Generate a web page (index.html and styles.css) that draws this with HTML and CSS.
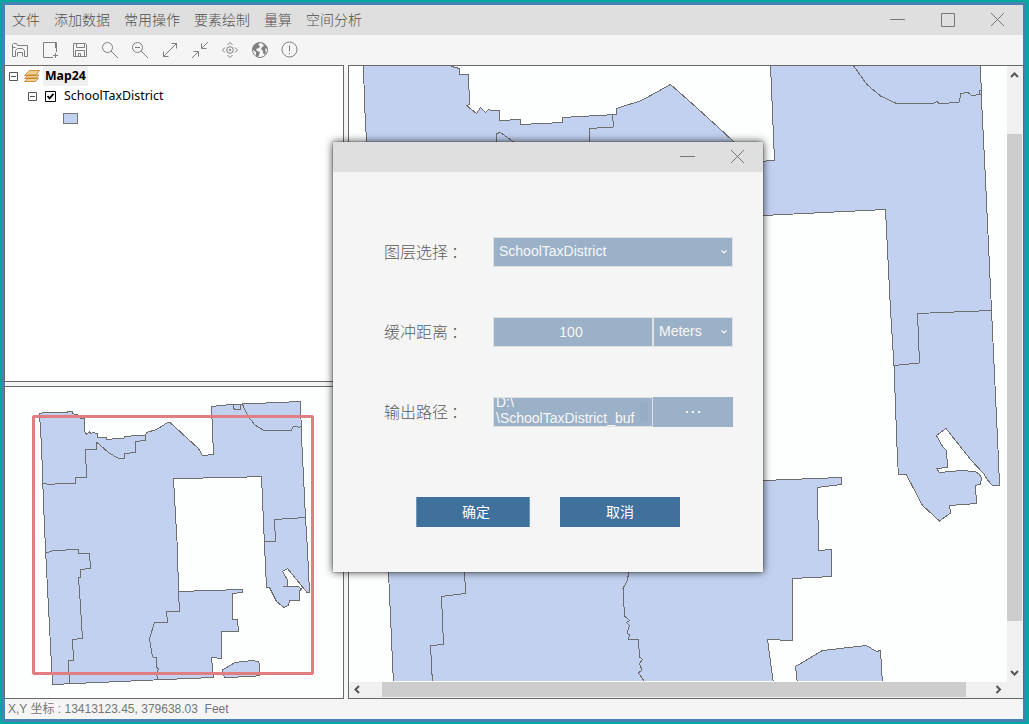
FILE: index.html
```html
<!DOCTYPE html>
<html lang="zh-CN">
<head>
<meta charset="utf-8">
<title>Map24</title>
<link rel="stylesheet" href="styles.css">
</head>
<body>
<div class="window">
  <header class="titlebar">
    <nav class="menu"><span>文件</span><span>添加数据</span><span>常用操作</span><span>要素绘制</span><span>量算</span><span>空间分析</span></nav>
    <svg class="window-controls" width="126" height="30" viewBox="0 0 126 30">
      <path d="M0 14.5h15" /><path d="M51.500 8.500h13v13h-13z"/><path d="M101 8l13 13M114 8l-13 13"/>
    </svg>
  </header>
  <div class="toolbar">
    <svg viewBox="0 0 20 20"><path d="M5.500 16.500h-3v-12l1-1h3l1 2h10v11h-3M2.500 7.500h3M5.500 16.500v-6l2-2h5l2 2v6M7.500 16.500v-4h5v4"/></svg>
    <svg viewBox="0 0 20 20"><path d="M13 17.500H3.500v-15h13V12M15.500 3v5M15.500 13v5M13 15.500h5"/></svg>
    <svg viewBox="0 0 20 20"><path d="M3.500 3.500h12l1 1v12h-13zM6.500 3.500v4h8v-4M5.500 16.500v-6h9v6M8.500 16.500v-3h2v3"/></svg>
    <svg viewBox="0 0 20 20"><circle cx="7.500" cy="7.500" r="5"/><path d="M11 11l7 7"/></svg>
    <svg viewBox="0 0 20 20"><circle cx="7.500" cy="7.500" r="5"/><path d="M11 11l7 7M5 7.500h5"/></svg>
    <svg viewBox="0 0 20 20"><path d="M3 17L17 3M11.500 3.500h5v5M3.500 11.500v5h5"/></svg>
    <svg viewBox="0 0 20 20"><path d="M18 2l-6 6M11.500 3.500v5h5M2 18l6-6M3.500 11.500h5v5"/></svg>
    <svg viewBox="0 0 20 20"><circle cx="10" cy="10" r="3.300"/><circle cx="10" cy="10" r=".8"/><path d="M7.500 5L10 2.500 12.500 5M7.500 15l2.500 2.500 2.500-2.500M5 7.500L2.500 10 5 12.500M15 7.500l2.500 2.500-2.500 2.500"/></svg>
    <svg viewBox="0 0 20 20"><circle cx="10" cy="10" r="7.500"/><path class="land" d="M2.500 8C3 5 6 2.500 10 2.500L8 5l2 1-1 2-3 1 1 2 3 1-1 3-1 2-2-1v-4l-3-2zM12 3c3 1 5 3 5.500 6L16 8l-1 2 1 2-1 3-2-2v-2l-2-2 1-2 2-1z"/></svg>
    <svg viewBox="0 0 20 20"><circle cx="9.500" cy="9.500" r="7.500"/><path d="M9.500 5.500v6M9.500 13v1.200"/></svg>
  </div>
  <main class="workspace">
    <div class="side">
      <section class="panel tree">
        <div class="node root">
          <svg class="toggle" viewBox="0 0 9 9"><path d="M.5.5h8v8h-8zM2 4.500h5"/></svg>
          <svg class="layers" viewBox="0 0 16 14"><path d="M.5 12.500l4-3.500h10l-3 3.500zM.5 9.500l4-3.500h10.500l-3 3.500zM.5 6.500l5-5h10l-4 5z"/></svg>
          <b>Map24</b>
        </div>
        <div class="node child">
          <svg class="toggle" viewBox="0 0 9 9"><path d="M.5.5h8v8h-8zM2 4.500h5"/></svg>
          <svg class="check" viewBox="0 0 11 11"><path class="box" d="M.5.5h10v10h-10z"/><path class="tick" d="M2.500 5l2 2.300 4-4.500"/></svg>
          <span>SchoolTaxDistrict</span>
        </div>
        <div class="swatch"></div>
      </section>
      <section class="panel overview">
        <svg class="map" viewBox="5 387 338 311">
          <g class="district">
            <path d="M39.500 413.500L45 412.500H67.500V411.500H72.500V413.500L79.500 415.500 80.500 418.500H84.500V431.500L86.500 434 89.500 432 91 434 93 432.500 97.500 433.500V437.500H106L106.500 439.500 124.500 438V436.500L145.500 435 146.500 432.500 156.500 429.500 167 423 170 422.500 198.500 448.500 202.500 455.500 213.500 454.500 211.500 406.500 231 404.500 300.500 401.500 301.500 436.500 305.500 517.500 307.500 550 309.500 592.500H307L287.500 568.500 282.500 571.500 287.500 580V586H282.500L298.500 586.500 301.500 589 299.500 591V600.500H289.500L288.500 605 284 607.500 276.500 601.500 269.500 587.500H266.500L264.500 545.500 261.500 476.500 233.500 477.500 173.500 478.500 177.500 550 178.500 591.500 242.500 589.500V592.500L232.500 593.500V619.500H237.500L238.500 631.500H221.500V658.500L211.500 657.500 213.500 677.500 165 679.500 52.500 684.500 45.500 549 43.500 503.500 41.500 445.500z"/>
            <path d="M224.500 677.500L222.500 670 235 662.500 252.500 660.500 258 661.500 259.500 663.500V675.500L252 676.500z"/>
          </g>
          <g class="boundary">
            <path d="M43.500 483.500L50.500 484.500 60 483.500H75.500V477.500H86.500L85.500 449.500H96.500L97 442.500 108.500 452.500 118.500 458.500H124.500V453.500L135.500 452.500V441.500L145.500 440.500V435"/>
            <path d="M233.500 405V408L235 409.500H240.500V405M242.500 404.500L248.500 417 255 425 264 430.500H291.500L293.500 426H297L298.500 427.500 301.500 426.500M264.500 541.500H275.500L274.500 519.500 305.500 517.500"/>
            <path d="M46.500 553L53.500 550.500 78.500 549.500V553.500H89.500L90.500 568.500 80.500 569.500V577.500H78.500L80 598.500 82.500 638.500 72.500 639.500 73.500 660.500H68.500L69.500 683.500M178.500 591.500L179.500 611.500H166.500L167.500 622.500H154.500L149.500 638.500 152.500 657 156.500 657.500V667L158.500 669 156.500 673 157.500 679"/>
          </g>
          <rect class="extent" x="33.500" y="416.500" width="279" height="257" rx="1"/>
        </svg>
      </section>
    </div>
    <section class="panel main-map">
      <svg class="map" viewBox="349 66 658 615">
        <g class="district">
          <path d="M363.500 64.500H451.500V66.500L459.500 68.500V74.500H468.500L469.500 104.500 466.500 105.500 476.500 113.500 480.500 107.500 485.500 112.500 488.500 109.500 494 111 499.500 110.500V120.500L520.500 119.500V124.500L562.500 122.500V117.500L616.500 114.500V108.500L641.500 100.500 670.500 84.500 687.500 99.500 718.500 127.500 733.500 141.500 750 162 774.500 160.500 770.500 64.500H980.500L981.500 100 985.500 180 991.500 310 998.500 460 999.500 485.500H992.500L987.500 480 984 474 971 460 946 428.500 936.500 435.500 942.500 446.500 946.500 450.500 947.500 467.500 936.500 468.500 939.500 472.500 961.500 470.500 975 471.500 979 474 981.500 478 980.500 484 975.500 485.500 976.500 503.500 949.500 505.500 950.500 513 939.500 521 922.500 505.500 906.500 475 898.500 474.500 897.500 460 894 365.500 890.500 310 885.500 209.500 763 215.500 640 220V487L763 480.500 841.500 477.500V484.500L817.500 487.500 818.500 550.500 831.500 549.500V576.500L792.500 578.500V640.500L767.500 639.500 773.500 684H393.500L388.500 572 366.500 141 364.500 103z"/>
          <path d="M797.500 684L795.500 666.500 822.500 650.500 866.500 645.500 876.500 651.500 880.500 650.500 882.500 684z"/>
        </g>
        <g class="boundary">
          <path d="M496.500 145V133.500L500.500 132.500 515 143M612.500 114.500L613.500 127 589.500 128.500V145"/>
          <path d="M853 65L867 84.500 880.500 96 896.500 103.500H933L937 101.500 939.500 104 959.500 102 960.500 93.500 968 92.500 971.500 95.500 981.500 94.500M979.500 94.500V90.500H981.500M894 365.500L919.500 363 917.500 313.500 991.500 310.500"/>
          <path d="M464.500 570L465.500 593.500 441.500 596.500 443.500 644.500 430.500 645.500 432.500 684M629.500 570L627 581 623 588.500 624.500 616 629.500 620.500 626.500 622.500 629.500 625.500 627 633 629.500 635 628.500 639.500H638.500L639.500 657 642.500 659.500 639.500 663.500 642 670 638.500 673 644 681"/>
        </g>
      </svg>
      <div class="vscroll">
        <svg viewBox="0 0 15 16"><path d="M4 11l3.500-3.500L11 11"/></svg><i></i>
        <svg class="end" viewBox="0 0 15 16"><path d="M4 5l3.500 3.500L11 5"/></svg>
      </div>
      <div class="hscroll">
        <svg viewBox="0 0 16 15"><path d="M10 4L6.500 7.500 10 11"/></svg><i></i>
        <svg class="end" viewBox="0 0 16 15"><path d="M5.500 4L9 7.500 5.500 11"/></svg>
      </div>
      <div class="corner"></div>
    </section>
  </main>
  <footer class="status">X,Y 坐标 : 13413123.45, 379638.03&nbsp; Feet</footer>
</div>

<div class="dialog">
  <div class="dialog-head">
    <svg width="66" height="30" viewBox="0 0 66 30"><path d="M0 14.500h15M51 8l13 13M64 8l-13 13"/></svg>
  </div>
  <form class="form">
    <div class="row"><label>图层选择<span class="colon">：</span></label><div class="field select wide"><span>SchoolTaxDistrict</span><svg viewBox="0 0 6 4"><path d="M.5.5L3 3 5.500.5"/></svg></div></div>
    <div class="row"><label>缓冲距离<span class="colon">：</span></label><div class="field number">100</div><div class="field select unit"><span>Meters</span><svg viewBox="0 0 6 4"><path d="M.5.5L3 3 5.500.5"/></svg></div></div>
    <div class="row"><label>输出路径<span class="colon">：</span></label><div class="field path"><span>D:\<br>\SchoolTaxDistrict_buf</span><i></i></div><div class="browse"><i></i><i></i><i></i></div></div>
    <div class="actions"><div class="button ok">确定</div><div class="button cancel">取消</div></div>
  </form>
</div>
</body>
</html>
```
FILE: styles.css
```css
* { box-sizing: border-box; }
body {
  margin: 0;
  width: 1029px;
  height: 724px;
  padding: 2px 3px 2px 2px;
  background: #00a99d;
  overflow: hidden;
  font-family: "Liberation Sans", "Noto Sans CJK SC", sans-serif;
}
svg { display: block; fill: none; flex: none; }
.window {
  height: 720px;
  border: 3px solid #4682b4;
  background: #f5f5f5;
  display: flex;
  flex-direction: column;
}
.titlebar {
  height: 30px;
  background: #dfdfdf;
  display: flex;
  justify-content: space-between;
  padding: 0 7px;
}
.menu {
  display: flex;
  gap: 14px;
  font: 300 14px/29px "Noto Sans CJK SC", sans-serif;
  color: #505050;
}
.window-controls { stroke: #777; }
.toolbar {
  height: 30px;
  display: flex;
  align-items: center;
  gap: 10px;
  padding-left: 5px;
}
.toolbar svg { width: 20px; height: 20px; stroke: #808080; }
.toolbar .land { fill: #808080; stroke: none; }

.workspace { height: 634px; margin: 0 -1px; display: flex; gap: 4px; }
.side { width: 340px; display: flex; flex-direction: column; gap: 4px; }
.panel { border: 1px solid #696969; background: #fdfefe; overflow: hidden; }
.tree { height: 317px; background: #fff; }
.overview { height: 313px; }
.map { width: 100%; height: 100%; shape-rendering: crispEdges; }
.district { fill: #c3d1f1; stroke: #6e6e6e; }
.boundary { stroke: #6e6e6e; }
.extent { stroke: #e07e82; stroke-width: 3; }

.node {
  display: flex;
  align-items: center;
  height: 20px;
  font-family: "Noto Sans", sans-serif;
  font-size: 12px;
  color: #000;
}
.root { padding-left: 4px; }
.root b { background: #f0f0f0; padding: 0 2px; line-height: 20px; margin-left: 3px; font-size: 12.3px; }
.child { padding-left: 23px; }
.child span { margin: -2px 0 0 8px; font-size: 12.400px; }
.toggle { width: 9px; height: 9px; stroke: #555; }
.layers { width: 16px; height: 14px; margin-left: 6px; fill: #f4cd8c; stroke: #bb7b2d; stroke-width: .8; }
.check { width: 11px; height: 11px; margin-left: 8px; stroke: #000; }
.check .tick { stroke-width: 1.8; }
.swatch { width: 15px; height: 11px; margin: 7px 0 0 58px; background: #c3d1f1; border: 1px solid #777; }

.main-map {
  width: 676px;
  display: grid;
  grid-template: 616px 16px / 658px 16px;
}
.main-map .map { height: 615px; }
.vscroll, .hscroll, .corner { display: flex; background: #f0f0f0; }
.vscroll { flex-direction: column; }
.vscroll svg { width: 15px; height: 16px; stroke: #555; stroke-width: 2; }
.vscroll i { width: 15px; height: 487px; margin-top: 52px; background: #cdcdcd; }
.vscroll .end { margin-top: auto; }
.hscroll svg { width: 16px; height: 15px; stroke: #555; stroke-width: 2; }
.hscroll i { width: 584px; height: 15px; margin-left: 17px; background: #cdcdcd; }
.hscroll .end { margin-left: auto; }
.status { height: 20px; padding-left: 3px; font-size: 12px; line-height: 20px; color: #757575; white-space: nowrap; }

.dialog {
  position: absolute;
  left: 333px;
  top: 142px;
  width: 430px;
  height: 430px;
  background: #f5f5f5;
  box-shadow: 0 0 8px #000c, 0 0 1px #555;
}
.dialog-head { height: 30px; background: #dfdfdf; display: flex; justify-content: flex-end; padding-right: 17px; }
.dialog-head svg { stroke: #777; }
.form { padding: 65px 30px 0 50px; }
.row { display: flex; height: 30px; margin-bottom: 50px; }
.row label { width: 110px; padding-left: 1px; font: 300 16px/29px "Noto Sans CJK SC", sans-serif; color: #5c5c5c; white-space: nowrap; }
.colon { margin-left: 3px; }
.field { height: 30px; border: 1px solid #e1e1e1; background: #9bb1c8; color: #f7f7f7; font-size: 14px; }
.select { display: flex; justify-content: space-between; padding: 0 5px; line-height: 27px; }
.select svg { width: 6px; height: 4px; margin-top: 12px; stroke: #f5f5f5; stroke-width: 1.2; }
.wide { width: 240px; }
.number { width: 160px; line-height: 28px; text-align: center; padding-right: 4px; }
.unit { width: 80px; }
.path { width: 160px; display: flex; align-items: center; justify-content: space-between; line-height: 16px; overflow: hidden; padding: 0 4px 0 2px; white-space: nowrap; }
.path span { margin-top: -4px; }
.path i { width: 8px; height: 20px; border-radius: 3px; background: #97adc5; }
.browse { width: 80px; height: 30px; background: #9bb1c8; display: flex; justify-content: center; gap: 4px; padding-top: 14px; }
.browse i { width: 2px; height: 2px; background: #f5f5f5; }
.actions { display: flex; gap: 30px; padding: 20px 0 0 33px; }
.button { height: 30px; background: #3f719c; color: #fff; text-align: center; font: 14px/29px "Noto Sans CJK SC", sans-serif; }
.ok { width: 114px; padding-left: 6px; border: solid #7296b6; border-width: 0 1px; }
.cancel { width: 120px; }
```
